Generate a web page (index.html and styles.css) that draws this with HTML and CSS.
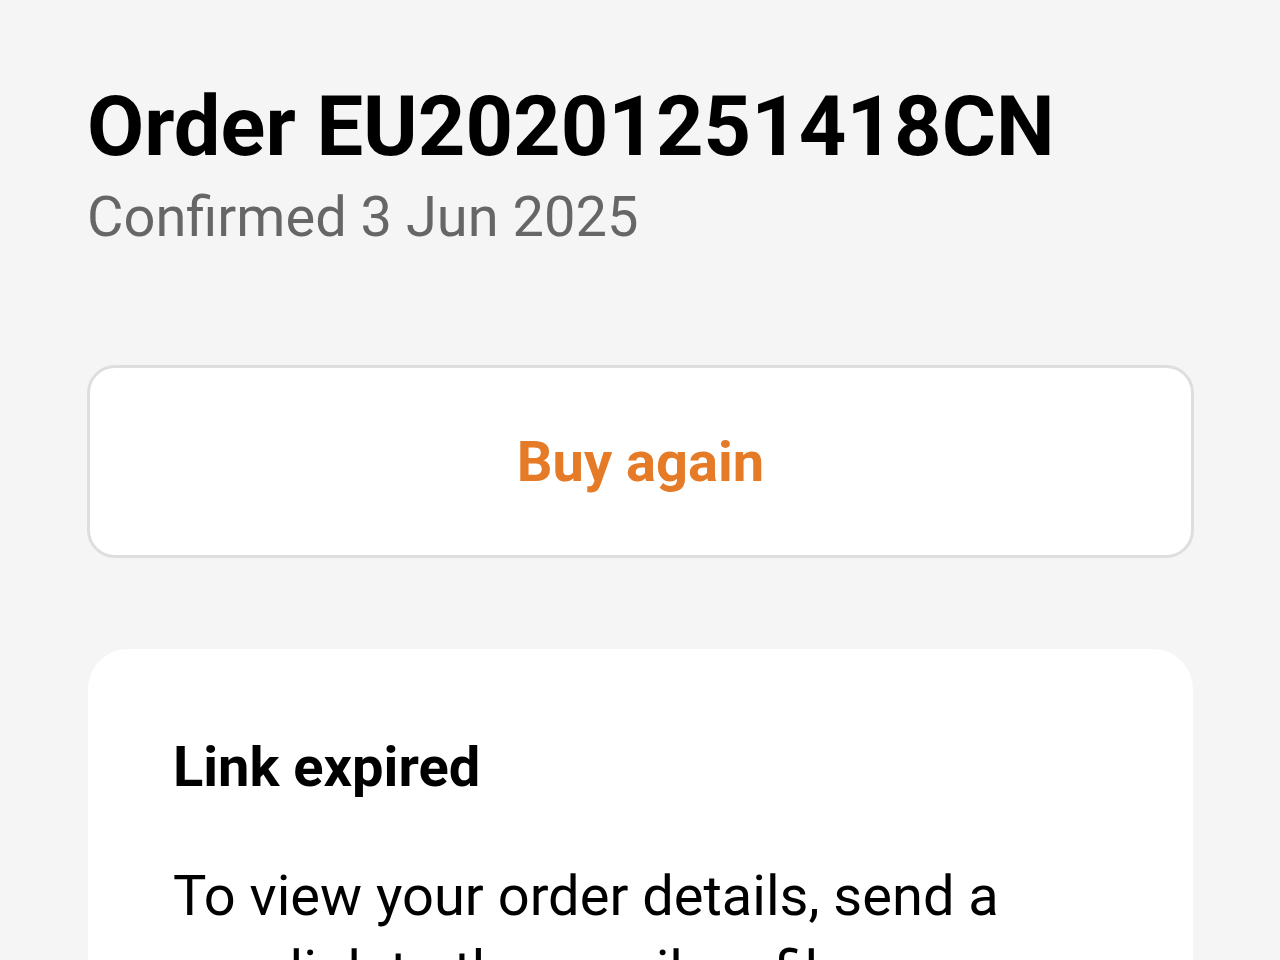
FILE: index.html
```html
<!DOCTYPE html>
<html lang="en">
<head>
<meta charset="utf-8">
<title>Order EU20201251418CN</title>
<link rel="stylesheet" href="styles.css">
</head>
<body>
<main class="page">
  <header class="order-head">
    <h1 class="order-title">Order EU20201251418CN</h1>
    <p class="order-date">Confirmed 3 Jun 2025</p>
  </header>
  <button class="buy-again" type="button">Buy again</button>
  <section class="card">
    <h2 class="card-title">Link expired</h2>
    <p class="card-text">To view your order details, send a new link to the email on file.</p>
  </section>
</main>
</body>
</html>
```
FILE: styles.css
```css
* { box-sizing: border-box; }
html, body { margin: 0; padding: 0; }
body {
  background: #f5f5f5;
  font-family: Roboto, "Noto Sans", "Liberation Sans", sans-serif;
  color: #000;
}
.page {
  display: flex;
  flex-direction: column;
  padding: 85px 86px 0 87px;
}
.order-head {
  display: flex;
  flex-direction: column;
}
.order-title {
  margin: 0;
  font-size: 83px;
  line-height: 83px;
  font-weight: 700;
}
.order-date {
  margin: 21px 0 0;
  font-size: 56px;
  line-height: 56px;
  color: #666;
  font-weight: 400;
}
.buy-again {
  margin-top: 120px;
  height: 193px;
  width: 100%;
  background: #fff;
  border: 3px solid #dedede;
  border-radius: 28px;
  font-family: inherit;
  font-size: 56px;
  font-weight: 700;
  color: #e57a27;
  padding: 0;
}
.card {
  margin: 91px 1px 0;
  background: #fff;
  border-radius: 40px;
  padding: 90px 120px 60px 85px;
  min-height: 400px;
}
.card-title {
  margin: 0;
  font-size: 56px;
  line-height: 56px;
  font-weight: 700;
}
.card-text {
  margin: 64px 0 0;
  font-size: 56px;
  line-height: 75px;
  font-weight: 400;
}
```
